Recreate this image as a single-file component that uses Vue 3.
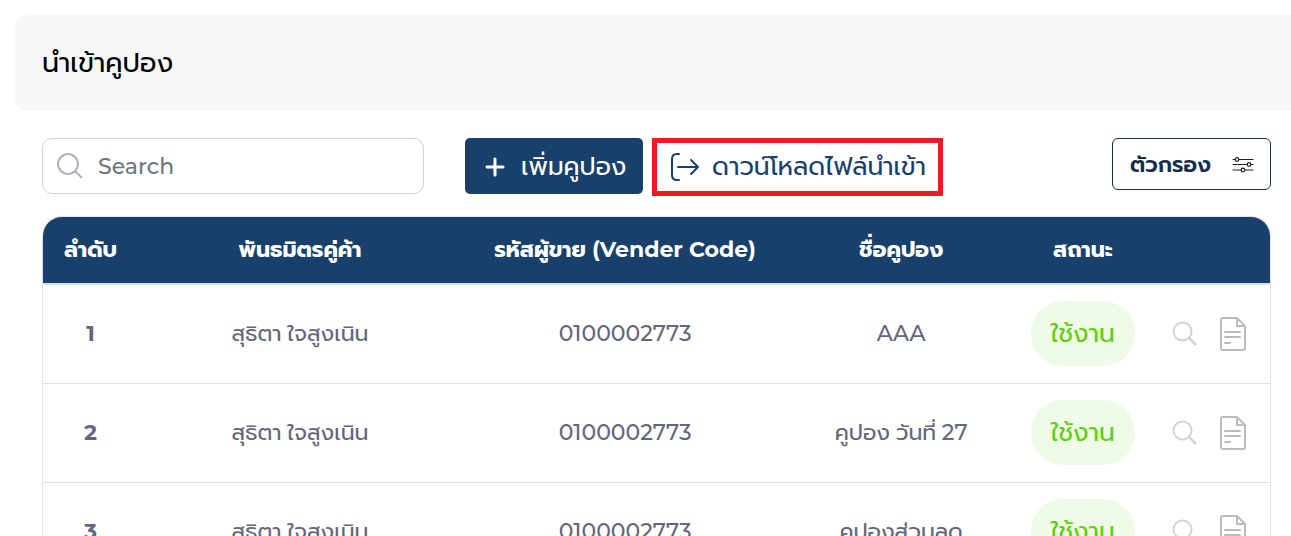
<script setup>
import { ref } from 'vue'

const query = ref('')
const rows = [
  { no: 1, partner: 'สุธิตา ใจสูงเนิน', code: '0100002773', name: '', suffix: 'AAA' },
  { no: 2, partner: 'สุธิตา ใจสูงเนิน', code: '0100002773', name: 'คูปอง วันที่ ', suffix: '27' },
  { no: 3, partner: 'สุธิตา ใจสูงเนิน', code: '0100002773', name: 'คูปองส่วนลด', suffix: '' }
]
</script>

<template>
  <main class="page">
    <header class="title-bar"><h1>นำเข้าคูปอง</h1></header>

    <section class="content">
      <div class="toolbar">
        <label class="search">
          <svg width="28" height="28" viewBox="0 0 28 28" fill="none" stroke="#b2b0bd" stroke-width="2" aria-hidden="true">
            <circle cx="12" cy="12" r="10" />
            <path d="M19 19L26 26" />
          </svg>
          <input v-model="query" type="text" placeholder="Search" aria-label="Search" />
        </label>

        <button class="add" type="button">
          <svg width="20" height="20" viewBox="0 0 20 20" stroke="#fff" stroke-width="3" stroke-linecap="round" aria-hidden="true">
            <path d="M10 2V18M2 10H18" />
          </svg>
          <span>เพิ่มคูปอง</span>
        </button>

        <button class="download" type="button">
          <svg width="30" height="30" viewBox="0 0 30 30" fill="none" stroke="#19406b" stroke-width="2" stroke-linecap="round" stroke-linejoin="round" aria-hidden="true">
            <path d="M9 2H7Q2 2 2 7V23Q2 28 7 28H9M8 15H28M21 8L28 15L21 22" />
          </svg>
          <span>ดาวน์โหลดไฟล์นำเข้า</span>
        </button>

        <button class="filter" type="button">
          <span>ตัวกรอง</span>
          <svg width="22" height="18" viewBox="0 0 22 18" fill="#fff" stroke="#222" stroke-width="1.200" aria-hidden="true">
            <path d="M1 4.500H21M1 9.500H21M1 15H21" stroke-linecap="round" />
            <circle cx="5" cy="4.500" r="1.8" />
            <circle cx="17" cy="9.500" r="1.8" />
            <circle cx="11" cy="15" r="1.8" />
          </svg>
        </button>
      </div>

      <div class="table-box">
        <table>
          <colgroup>
            <col class="c-no" /><col class="c-partner" /><col class="c-code" />
            <col class="c-name" /><col class="c-status" /><col />
          </colgroup>
          <thead>
            <tr>
              <th scope="col">ลำดับ</th>
              <th scope="col">พันธมิตรคู่ค้า</th>
              <th scope="col">รหัสผู้ขาย (Vender Code)</th>
              <th scope="col">ชื่อคูปอง</th>
              <th scope="col">สถานะ</th>
              <td></td>
            </tr>
          </thead>
          <tbody>
            <tr v-for="row in rows" :key="row.no">
              <th scope="row">{{ row.no }}</th>
              <td>{{ row.partner }}</td>
              <td class="medium">{{ row.code }}</td>
              <td>{{ row.name }}<span class="medium">{{ row.suffix }}</span></td>
              <td><span class="badge">ใช้งาน</span></td>
              <td class="action-cell">
                <div class="actions">
                  <button type="button" aria-label="ดูรายละเอียด">
                    <svg width="26" height="26" viewBox="0 0 26 26" fill="none" stroke="#d3d3d3" stroke-width="2" aria-hidden="true">
                      <circle cx="10.500" cy="10.500" r="9" />
                      <path d="M17 17L24 24" stroke-width="2.500" />
                    </svg>
                  </button>
                  <button type="button" aria-label="เอกสาร">
                    <svg width="28" height="36" viewBox="0 0 28 36" fill="none" stroke="#bcbcbc" stroke-width="2" stroke-linejoin="round" stroke-linecap="round" aria-hidden="true">
                      <path d="M4 2H18L26 10V32Q26 34 24 34H4Q2 34 2 32V4Q2 2 4 2ZM18 2V10H26M6 16H21M6 21H21M6 27H11" />
                    </svg>
                  </button>
                </div>
              </td>
            </tr>
          </tbody>
        </table>
      </div>
    </section>
  </main>
</template>

<style>
body {
  margin: 0;
  background: #fff;
}
</style>

<style scoped>
* {
  box-sizing: border-box;
}
.page,
.page button,
.page input {
  font-family: Montserrat, Prompt, "Noto Sans Thai", Inter, "Noto Sans", sans-serif;
}
.page {
  padding: 15px 0 0 15px;
}
.title-bar {
  display: flex;
  align-items: center;
  height: 96px;
  padding: 0 27px;
  background: #f8f8fb;
  border-radius: 12px 0 0 12px;
}
h1 {
  margin: 0;
  font-size: 27px;
  font-weight: 400;
  line-height: 40px;
  color: #000;
}
.content {
  padding: 27px 20px 0 27px;
}
.toolbar {
  display: flex;
  align-items: flex-start;
}
.search {
  display: flex;
  align-items: center;
  gap: 14px;
  width: 382px;
  height: 56px;
  padding: 0 13px;
  border: 1px solid #ced4da;
  border-radius: 10px;
}
.search svg {
  flex: none;
}
.search input {
  flex: 1;
  min-width: 0;
  padding: 0;
  border: 0;
  outline: 0;
  background: none;
  font-size: 22px;
  font-weight: 500;
  color: #6c757d;
}
.search input::placeholder {
  color: #6c757d;
  opacity: 1;
}
button {
  padding: 0;
  border: 0;
  background: none;
  white-space: nowrap;
  cursor: pointer;
}
.add,
.download,
.filter {
  display: flex;
  align-items: center;
}
.add {
  gap: 16px;
  width: 178px;
  height: 56px;
  margin-left: 41px;
  padding: 1px 0 0 20px;
  border-radius: 5px;
  background: #19406b;
  color: #fff;
  font-size: 25px;
}
.download {
  gap: 12px;
  width: 291px;
  height: 58px;
  margin-left: 9px;
  padding: 0 0 0 13px;
  border: 5px solid #ed1c24;
  color: #19406b;
  font-size: 25px;
}
.filter {
  justify-content: space-between;
  width: 159px;
  height: 52px;
  margin-left: auto;
  padding: 0 16px 0 17px;
  border: 1px solid #132f4e;
  border-radius: 6px;
  color: #132f4e;
  font-size: 22px;
  font-weight: 600;
}
.table-box {
  margin-top: 20px;
  border: 1px solid #e3e3ec;
  border-radius: 20px 20px 0 0;
  overflow: hidden;
}
table {
  width: 100%;
  table-layout: fixed;
  border-collapse: separate;
  border-spacing: 0;
  color: #65657b;
  font-size: 22px;
  text-align: center;
}
.c-no { width: 95px; }
.c-partner { width: 26.4%; }
.c-code { width: 26.6%; }
.c-name { width: 18.4%; }
.c-status { width: 11.2%; }
th,
td {
  padding: 0 0 2px;
}
thead th,
thead td {
  height: 68px;
  border-bottom: 2px solid #dee2e6;
  background: #19406b;
  color: #fff;
  font-weight: 700;
  white-space: nowrap;
}
tbody th,
tbody td {
  height: 99px;
  border-bottom: 1px solid #dee2e6;
}
tbody .action-cell {
  padding: 0;
}
.medium {
  font-weight: 500;
}
.badge {
  display: flex;
  align-items: center;
  justify-content: center;
  width: 104px;
  height: 65px;
  margin: 0 auto;
  padding-top: 2px;
  border-radius: 32px;
  background: #effbe7;
  color: #5dcf0b;
  font-size: 25px;
}
.actions {
  display: flex;
  align-items: center;
  justify-content: flex-end;
  gap: 21px;
  padding-right: 23px;
}
.actions svg {
  display: block;
}
</style>
